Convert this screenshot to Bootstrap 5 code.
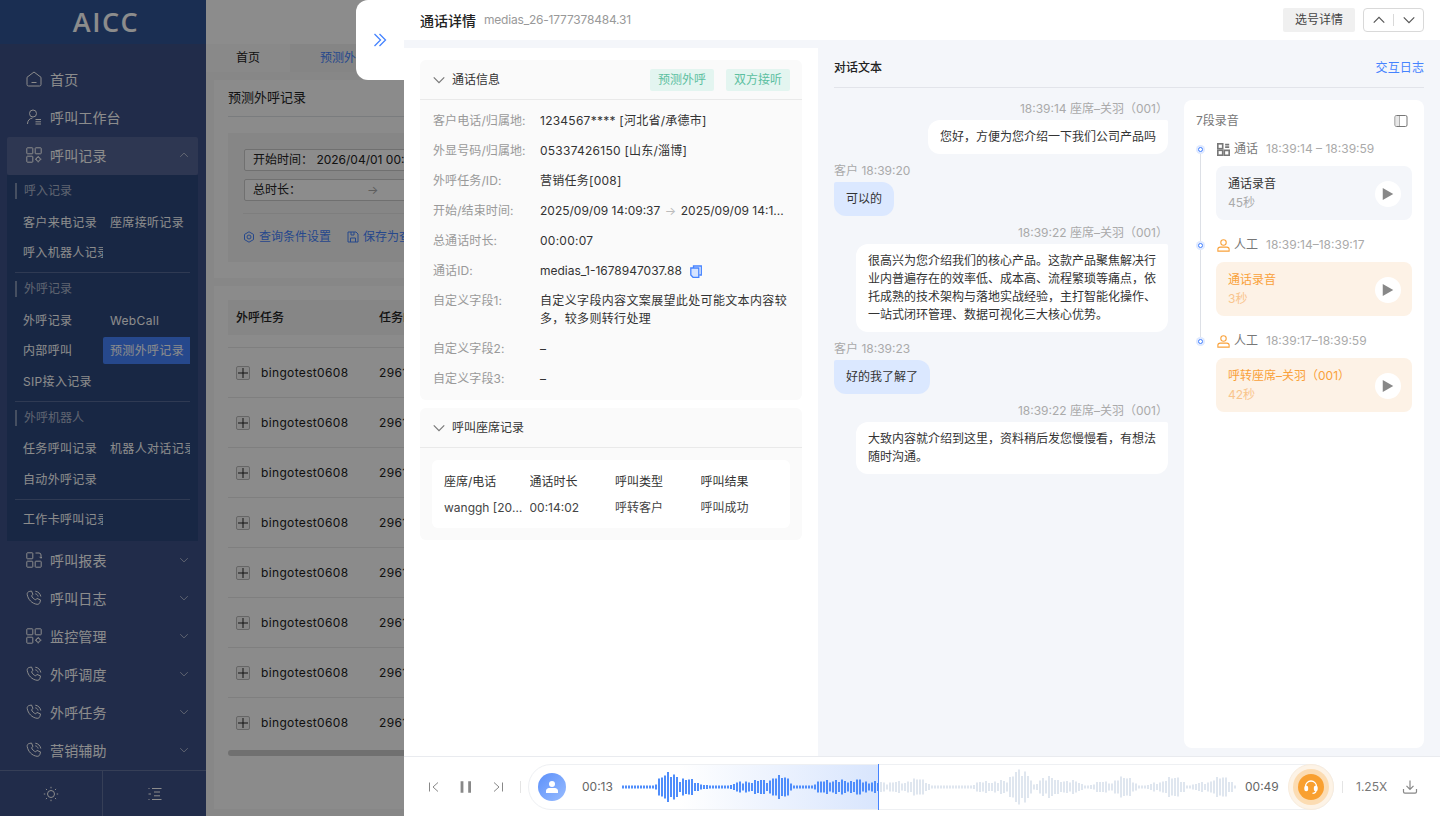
<!DOCTYPE html>
<html lang="zh">

<head>
    <meta charset="utf-8">
    <title>通话详情</title>
    <link href="https://cdn.jsdelivr.net/npm/bootstrap@5.3.2/dist/css/bootstrap.min.css" rel="stylesheet">

    <style>
        body {
            font-family: Inter, "Noto Sans CJK SC", sans-serif;
            font-size: 12px;
            color: #333;
            background: #fff;
        }

        .app { width: 1440px; height: 816px; overflow: hidden; position: relative; }
        .ico { fill: none; stroke: currentColor; stroke-width: 1; flex: none; }

        /* sidebar */
        .side { width: 206px; flex: none; background: #3c5087; color: #fff; }
        .side-logo { height: 44px; background: #315495; font-size: 27px; font-weight: 600; letter-spacing: 1.5px; font-family: "Open Sans", sans-serif; padding-left: 6px; }
        .side-nav { padding: 16px 8px 0 7px; flex: 1; }
        .side-link { height: 38px; padding: 0 9px 0 19px; font-size: 14px; letter-spacing: .15px; border-radius: 2px; }
        .side-link.open { background: #546495; margin-top: 1px; padding-bottom: 2px; }
        .side-link .caret { margin-left: auto; opacity: .7; }
        .sub-box { background: #2c477d; height: 366px; padding: 0 8px; overflow: hidden; }
        .sub-label { height: 16px; margin-top: 8px; padding-left: 7px; border-left: 2px solid rgba(255, 255, 255, .4); line-height: 16px; color: rgba(255, 255, 255, .62); margin-bottom: 9.5px; }
        .sub-grid { display: grid; grid-template-columns: 87px 87px; grid-auto-rows: 30.5px; margin-left: 1px; }
        .sub-item { padding-left: 7px; line-height: 27px; height: 27px; white-space: nowrap; overflow: hidden; letter-spacing: .33px; }
        .sub-item.active { background: #4583ff; border-radius: 2px 0 0 2px; }
        .sub-sep { border-top: 1px solid rgba(255, 255, 255, .2); margin: 2.5px 0 0; }
        .sub-last { margin-top: 6px; }
        .side-foot { height: 46px; border-top: 1px solid rgba(255, 255, 255, .2); }
        .side-foot > div { flex: 1; }
        .side-foot > div:first-child { flex: none; width: 102px; }
        .side-foot > div + div { border-left: 1px solid rgba(255, 255, 255, .2); }

        /* page behind the mask */
        .page-main { background: #f6f6f6; flex: 1; min-width: 0; color: #222; }
        .page-top { height: 44px; background: #fff; }
        .page-tabs { height: 28px; background: #f3f3f3; }
        .page-tab { width: 84px; background: #fafafa; line-height: 28px; text-align: center; }
        .page-tab.on { color: #4583ff; background: #f3f3f3; padding-left: 30px; text-align: left; white-space: nowrap; width: 114px; }
        .page-card { background: #fdfdfd; margin: 8px 0 0 8px; padding: 0 14px; }
        .filter-box { background: #f5f5f5; margin-top: 16px; padding: 16px; height: 129px; }
        .filter-field { height: 22px; width: 400px; border: 1px solid #ccc; border-radius: 2px; background: #fff; padding-left: 8px; margin-bottom: 8px; line-height: 20px; }
        .filter-gap { margin-left: 66px; color: #aaa; }
        .filter-link { color: #4583ff; margin-top: 12px; padding-top: 14px; border-top: 1px solid #e5e5e5; margin-left: -1px; }
        .grid-head { height: 35px; background: #f5f5f5; margin-top: 13px; padding-left: 8px; font-weight: 500; }
        .grid-rows { padding-top: 12px; }
        .grid-row { height: 50px; border-top: 1px solid #e8e8e8; padding-left: 8px; font-size: 12px; letter-spacing: .35px; }
        .grid-plus { width: 14px; height: 14px; border: 1px solid #bbb; background: #f4f4f4; border-radius: 2px; margin-right: 11px; }
        .grid-scroll { height: 6px; background: #ccc; border-radius: 3px; margin-top: 3px; }

        /* mask and drawer */
        .shade { position: absolute; inset: 0; background: rgba(0, 0, 0, .45); z-index: 10; }
        .drawer { position: absolute; top: 0; right: 0; bottom: 0; width: 1036px; background: #f4f6fa; z-index: 11; }
        .drawer-tab { position: absolute; left: -48px; top: 0; width: 48px; height: 80px; background: #fff; border-radius: 12px 0 0 12px; color: #4583ff; }
        .drawer-head { height: 40px; background: #fff; padding: 0 16px; }
        .head-title { font-size: 14px; font-weight: 500; color: #222; }
        .head-id { color: #999; margin-left: 8px; letter-spacing: -.2px; }
        .btn-pick { background: #f0f0f0; border: 0; border-radius: 2px; height: 24px; width: 72px; padding: 0; font-size: 12px; color: #444; }
        .btn-pair { width: 61px; height: 24px; border: 1px solid #d9d9d9; border-radius: 4px; margin-left: 8px; color: #555; }
        .btn-pair i { width: 1px; height: 12px; background: #d9d9d9; }

        .info-col { width: 414px; background: #fff; margin-top: 8px; padding: 12px 16px; flex: none; }
        .info-card { background: #fafafa; border-radius: 6px; margin-bottom: 8px; }
        .info-head { height: 40px; padding: 0 12px; border-bottom: 1px solid #e9e9e9; }
        .info-head .ico { color: #777; margin-right: 6px; }
        .tag-mint { background: #e3f5f0; color: #5cc0a0; height: 22px; width: 64px; line-height: 22px; text-align: center; border-radius: 2px; margin-left: 12px; }
        .info-body { padding: 12px 12px 0 13px; height: 300px; }
        .info-line { margin-bottom: 12px; line-height: 18px; }
        .info-key { width: 107px; flex: none; color: #999; letter-spacing: .1px; }
        .info-val { color: #333; min-width: 0; letter-spacing: .25px; }
        .info-tight { letter-spacing: 0; }
        .info-wide { letter-spacing: .35px; }
        .info-arrow { color: #bbb; margin: 0 4.5px; }
        .seat-box { background: #fff; border-radius: 6px; margin: 12px; height: 68px; padding: 13px 12px 0; }
        .seat-table { table-layout: fixed; width: 342px; margin: 0; --bs-table-bg: transparent; color: #333; }
        .seat-table td { padding: 0; border: 0; height: 26px; line-height: 18px; white-space: nowrap; overflow: hidden; text-overflow: ellipsis; }
        .seat-table thead td { height: 21px; vertical-align: top; }
        .seat-table tbody td { color: #444; padding-top: 5px; }

        .talk-col { flex: 1; padding: 8px 16px 8px 16px; min-width: 0; }
        .talk-head { height: 40px; border-bottom: 1px solid #e2e4ea; margin-bottom: 12px; padding-top: 1px; }
        .talk-title { font-weight: 500; color: #222; }
        .talk-link { color: #4583ff; letter-spacing: .1px; }
        .msg-list { width: 334px; flex: none; margin-top: -1px; }
        .msg { margin-bottom: 7px; }
        .msg-meta { line-height: 18px; color: #aaa; padding-top: 1px; margin-bottom: 2px; }
        .msg-out { text-align: right; }
        .bubble { display: inline-block; padding: 8px 12px; line-height: 18px; border-radius: 12px; text-align: left; color: #333; }
        .msg-out .bubble { background: #fff; border-top-right-radius: 2px; }
        .msg-in .bubble { background: #dbe8ff; border-top-left-radius: 2px; }

        .rec-panel { width: 240px; flex: none; background: #fff; border-radius: 8px; padding: 11px 12px; height: 648px; }
        .rec-top { height: 20px; color: #777; margin-bottom: 9px; line-height: 20px; }
        .rec-steps { position: relative; padding-left: 20px; }
        .rec-steps::before { content: ""; position: absolute; left: 3.5px; top: 10px; height: 192px; width: 1px; background: #dde0e6; }
        .rec-step { margin-bottom: 16px; }
        .rec-line { height: 18px; color: #777; margin-bottom: 8px; position: relative; padding-left: 1px; }
        .rec-line b { font-weight: 400; color: #aaa; margin-left: 8px; white-space: nowrap; }
        .rec-dot { position: absolute; left: -20.5px; top: 4.5px; width: 9px; height: 9px; border-radius: 50%; background: #dfe9ff; }
        .rec-dot::after { content: ""; position: absolute; left: 2px; top: 2px; width: 5px; height: 5px; border-radius: 50%; border: 1.5px solid #4583ff; background: #fff; }
        .rec-card { height: 54px; border-radius: 8px; background: #f4f6fa; padding: 9px 12px 7px; line-height: 18px; }
        .rec-card small { display: block; font-size: 12px; color: #aaa; line-height: 20px; }
        .rec-card.warm { background: #fdf2e6; color: #f9a13a; }
        .rec-card.warm small { color: #f9c58d; }
        .rec-play { width: 26px; height: 26px; border-radius: 50%; background: #fff; flex: none; margin-right: -1px; color: #888; }

        .player { height: 60px; background: #fff; border-top: 1px solid #e9ebef; padding: 0 16px 0 24px; flex: none; }
        .player .ico { color: #888; }
        .player-sep { width: 1px; height: 12px; background: #e4e4e4; flex: none; }
        .pill { width: 806px; height: 46px; border: 1px solid #eef0f3; border-radius: 23px; position: relative; flex: none; margin-left: 7px; }
        .pill-fill { position: absolute; left: 150px; top: 0; bottom: 0; width: 200px; background: linear-gradient(90deg, #fff, #d8e5fd); }
        .pill-mark { position: absolute; left: 349px; top: -1px; bottom: -1px; width: 1px; background: #4583ff; }
        .pill-face { position: absolute; left: 9px; top: 8px; width: 28px; height: 28px; border-radius: 50%; background: linear-gradient(135deg, #5c90fa, #98bcff); color: #fff; }
        .pill-time { position: absolute; top: 13px; line-height: 18px; font-size: 12px; color: #666; }
        .wave { position: absolute; left: 93px; top: 0; bottom: 0; width: 615px; }
        .wave span { position: absolute; top: 50%; width: 2px; transform: translateY(-50%); background: #dfe6ef; }
        .wave span.done { background: #4f8dfb; }
        .ring { position: absolute; left: 759px; top: -1px; width: 46px; height: 46px; border-radius: 50%; background: #fdf3e6; border: 1px solid #f8ecdd; }
        .ring i { position: absolute; left: 4px; top: 4px; width: 36px; height: 36px; border-radius: 50%; background: #fcdcb2; }
        .ring b { position: absolute; left: 9px; top: 9px; width: 26px; height: 26px; border-radius: 50%; background: #f9a030; color: #fff; }
        .speed { color: #777; font-size: 12px; }
    </style>
</head>

<body>
    <svg width="0" height="0" class="position-absolute">
        <defs>
            <symbol id="i-down" viewBox="0 0 12 12"><path d="M1.5 3.8 6 8.300l4.500-4.500" /></symbol>
            <symbol id="i-up" viewBox="0 0 12 12"><path d="M1.5 8.200 6 3.700l4.500 4.500" /></symbol>
            <symbol id="i-home" viewBox="0 0 16 16"><path d="M1 6.300 8 1l7 5.300v7.200a1.500 1.500 0 0 1-1.500 1.500h-11A1.500 1.500 0 0 1 1 13.500ZM5.500 11.500h5" /></symbol>
            <symbol id="i-user" viewBox="0 0 16 16"><circle cx="7" cy="4.500" r="3.500" /><path d="M1.500 15c0-3.500 2-5.500 5-6M9.500 10.500H15M9.500 12.800H15M9.500 15H15" /></symbol>
            <symbol id="i-grid" viewBox="0 0 16 16"><rect x=".8" y=".8" width="6" height="6" rx=".6" /><rect x="9.200" y=".8" width="6" height="6" rx=".6" /><rect x=".8" y="9.200" width="6" height="6" rx=".6" /><circle cx="12.200" cy="12.200" r="2" /><path d="M12.200 9v1.200M12.200 14.200v1.200M9 12.200h1.200M14.200 12.200h1.200" /></symbol>
            <symbol id="i-report" viewBox="0 0 16 16"><rect x=".8" y=".8" width="6" height="6" rx=".6" /><rect x=".8" y="9.200" width="6" height="6" rx=".6" /><rect x="9.200" y="9.200" width="6" height="6" rx=".6" /><path d="M9.500 1H13a2 2 0 0 1 2 2v3M13.500 4.800 15 6.300l1-1.300" /></symbol>
            <symbol id="i-phone" viewBox="0 0 16 16"><path d="M3.200 1.500 5.500 1l1.500 3.500-1.500 1.200c.7 1.800 2.300 3.400 4.200 4.200l1.200-1.500 3.600 1.500-.5 2.300c-.3 1.300-1.500 2.300-2.900 2.100C6 13.700 2 9.500 1.200 4.400 1 3 1.900 1.800 3.200 1.500Z" /><path d="M9.300 1.200c2.800.3 5 2.500 5.500 5.300M9.300 3.800c1.400.2 2.500 1.300 2.800 2.700" /></symbol>
            <symbol id="i-play" viewBox="0 0 12 12"><path d="M1.500 .8v10.400L10.500 6Z" fill="currentColor" stroke="none" /></symbol>
            <symbol id="i-person" viewBox="0 0 12 12"><circle cx="6" cy="3.200" r="2.500" /><path d="M.8 9.500c0-1.200 1-2 2.200-2h6c1.200 0 2.200.8 2.200 2v1.700H.8Z" /></symbol>
        </defs>
    </svg>

    <div class="app d-flex">
        <aside class="side d-flex flex-column">
            <div class="side-logo d-flex align-items-center justify-content-center">AICC</div>
            <div class="side-nav">
                <div class="side-link d-flex align-items-center gap-2"><svg class="ico" width="16" height="16"><use href="#i-home" /></svg>首页</div>
                <div class="side-link d-flex align-items-center gap-2"><svg class="ico" width="16" height="16"><use href="#i-user" /></svg>呼叫工作台</div>
                <div class="side-link open d-flex align-items-center gap-2"><svg class="ico" width="16" height="16"><use href="#i-grid" /></svg>呼叫记录<svg class="ico caret" width="10" height="10"><use href="#i-up" /></svg></div>
                <div class="sub-box">
                    <div class="sub-label">呼入记录</div>
                    <div class="sub-grid">
                        <div class="sub-item">客户来电记录</div>
                        <div class="sub-item">座席接听记录</div>
                        <div class="sub-item">呼入机器人记录</div>
                    </div>
                    <div class="sub-sep"></div>
                    <div class="sub-label">外呼记录</div>
                    <div class="sub-grid">
                        <div class="sub-item">外呼记录</div>
                        <div class="sub-item">WebCall</div>
                        <div class="sub-item">内部呼叫</div>
                        <div class="sub-item active">预测外呼记录</div>
                        <div class="sub-item">SIP接入记录</div>
                    </div>
                    <div class="sub-sep"></div>
                    <div class="sub-label">外呼机器人</div>
                    <div class="sub-grid">
                        <div class="sub-item">任务呼叫记录</div>
                        <div class="sub-item">机器人对话记录</div>
                        <div class="sub-item">自动外呼记录</div>
                    </div>
                    <div class="sub-sep"></div>
                    <div class="sub-grid sub-last">
                        <div class="sub-item">工作卡呼叫记录</div>
                    </div>
                </div>
                <div class="side-link d-flex align-items-center gap-2"><svg class="ico" width="16" height="16"><use href="#i-report" /></svg>呼叫报表<svg class="ico caret" width="10" height="10"><use href="#i-down" /></svg></div>
                <div class="side-link d-flex align-items-center gap-2"><svg class="ico" width="16" height="16"><use href="#i-phone" /></svg>呼叫日志<svg class="ico caret" width="10" height="10"><use href="#i-down" /></svg></div>
                <div class="side-link d-flex align-items-center gap-2"><svg class="ico" width="16" height="16"><use href="#i-grid" /></svg>监控管理<svg class="ico caret" width="10" height="10"><use href="#i-down" /></svg></div>
                <div class="side-link d-flex align-items-center gap-2"><svg class="ico" width="16" height="16"><use href="#i-phone" /></svg>外呼调度<svg class="ico caret" width="10" height="10"><use href="#i-down" /></svg></div>
                <div class="side-link d-flex align-items-center gap-2"><svg class="ico" width="16" height="16"><use href="#i-phone" /></svg>外呼任务<svg class="ico caret" width="10" height="10"><use href="#i-down" /></svg></div>
                <div class="side-link d-flex align-items-center gap-2"><svg class="ico" width="16" height="16"><use href="#i-phone" /></svg>营销辅助<svg class="ico caret" width="10" height="10"><use href="#i-down" /></svg></div>
            </div>
            <div class="side-foot d-flex">
                <div class="d-flex align-items-center justify-content-center">
                    <svg class="ico" width="16" height="16" viewBox="0 0 16 16"><circle cx="8" cy="8" r="3.500" /><path d="M8 .8v1.500M8 13.700v1.500M.8 8h1.500M13.700 8h1.500M2.900 2.900 4 4M12 12l1.100 1.100M2.900 13.100 4 12M12 4l1.100-1.100" /></svg>
                </div>
                <div class="d-flex align-items-center justify-content-center">
                    <svg class="ico" width="16" height="16" viewBox="0 0 16 16"><path d="M5 2.500h9.500M7 6h6M7 9.800h6M5 13.500h9.500M1.500 8h2.500M1.500 2.500h1M1.500 13.500h1" /></svg>
                </div>
            </div>
        </aside>

        <main class="page-main">
            <div class="page-top"></div>
            <div class="page-tabs d-flex">
                <div class="page-tab">首页</div>
                <div class="page-tab on">预测外呼记录</div>
            </div>
            <div class="page-card" style="height:198px">
                <div class="border-bottom d-flex align-items-center" style="height:37px;font-size:13px">预测外呼记录</div>
                <div class="filter-box">
                    <div class="filter-field">开始时间： 2026/04/01 00:00:00</div>
                    <div class="filter-field">总时长：<span class="filter-gap">→</span></div>
                    <div class="filter-link d-flex">
                        <span class="d-flex align-items-center gap-1"><svg class="ico" width="12" height="12" viewBox="0 0 12 12"><circle cx="6" cy="6" r="2" /><path d="M6 .8 10.500 3.400v5.200L6 11.200 1.500 8.600V3.400Z" /></svg>查询条件设置</span>
                        <span class="d-flex align-items-center gap-1 ms-3"><svg class="ico" width="12" height="12" viewBox="0 0 12 12"><path d="M1 1h8l2 2v8H1ZM4 1v3h3V1M3.500 11V7h5v4" /></svg>保存为查询</span>
                    </div>
                </div>
            </div>
            <div class="page-card" style="height:523px;padding-top:1px">
                <div class="grid-head d-flex align-items-center"><span style="width:143px">外呼任务</span><span>任务ID</span></div>
                <div id="gridRows" class="grid-rows"></div>
                <div class="grid-scroll"></div>
            </div>
        </main>

        <div class="shade"></div>

        <section class="drawer d-flex flex-column">
            <div class="drawer-tab d-flex align-items-center justify-content-center">
                <svg class="ico" width="16" height="16" viewBox="0 0 16 16" style="stroke-width:1.300"><path d="M2.500 2 8.500 8l-6 6M7.500 2l6 6-6 6" /></svg>
            </div>

            <div class="drawer-head d-flex align-items-center">
                <span class="head-title">通话详情</span>
                <span class="head-id">medias_26-1777378484.31</span>
                <button type="button" class="btn btn-pick ms-auto">选号详情</button>
                <div class="btn-pair d-flex align-items-center justify-content-evenly">
                    <svg class="ico" width="14" height="14"><use href="#i-up" /></svg><i></i><svg class="ico" width="14" height="14"><use href="#i-down" /></svg>
                </div>
            </div>

            <div class="d-flex flex-grow-1" style="min-height:0">
                <div class="info-col">
                    <div class="info-card">
                        <div class="info-head d-flex align-items-center">
                            <svg class="ico" width="14" height="14"><use href="#i-down" /></svg>
                            <span>通话信息</span>
                            <span class="tag-mint ms-auto">预测外呼</span>
                            <span class="tag-mint">双方接听</span>
                        </div>
                        <div class="info-body">
                            <div class="info-line d-flex"><span class="info-key">客户电话/归属地:</span><span class="info-val">1234567**** [河北省/承德市]</span></div>
                            <div class="info-line d-flex"><span class="info-key">外显号码/归属地:</span><span class="info-val">05337426150 [山东/淄博]</span></div>
                            <div class="info-line d-flex"><span class="info-key">外呼任务/ID:</span><span class="info-val">营销任务[008]</span></div>
                            <div class="info-line d-flex"><span class="info-key">开始/结束时间:</span><span class="info-val info-tight text-nowrap">2025/09/09 14:09:37<span class="info-arrow">→</span>2025/09/09 14:1...</span></div>
                            <div class="info-line d-flex"><span class="info-key">总通话时长:</span><span class="info-val">00:00:07</span></div>
                            <div class="info-line d-flex"><span class="info-key">通话ID:</span><span class="info-val info-tight d-flex align-items-center">medias_1-1678947037.88
                                <svg class="ico ms-2" width="12" height="13" viewBox="0 0 12 13" style="color:#4583ff;stroke-width:1.300"><path d="M3.500 3V1h7.800v9h-2" /><path d="M.8 3h8v9.300H3L.8 10Z" fill="#d6e4ff" /></svg></span></div>
                            <div class="info-line d-flex"><span class="info-key">自定义字段1:</span><span class="info-val info-wide">自定义字段内容文案展望此处可能文本内容较多，较多则转行处理</span></div>
                            <div class="info-line d-flex"><span class="info-key">自定义字段2:</span><span class="info-val">–</span></div>
                            <div class="info-line d-flex"><span class="info-key">自定义字段3:</span><span class="info-val">–</span></div>
                        </div>
                    </div>
                    <div class="info-card" style="height:132px">
                        <div class="info-head d-flex align-items-center">
                            <svg class="ico" width="14" height="14"><use href="#i-down" /></svg>
                            <span>呼叫座席记录</span>
                        </div>
                        <div class="seat-box">
                            <table class="table seat-table">
                                <thead>
                                    <tr><td>座席/电话</td><td>通话时长</td><td>呼叫类型</td><td>呼叫结果</td></tr>
                                </thead>
                                <tbody>
                                    <tr><td class="pe-1">wanggh [2001]</td><td>00:14:02</td><td>呼转客户</td><td>呼叫成功</td></tr>
                                </tbody>
                            </table>
                        </div>
                    </div>
                </div>

                <div class="talk-col d-flex flex-column">
                    <div class="talk-head d-flex align-items-center justify-content-between">
                        <span class="talk-title">对话文本</span>
                        <span class="talk-link">交互日志</span>
                    </div>
                    <div class="d-flex gap-3">
                        <div class="msg-list">
                            <div class="msg msg-out"><div class="msg-meta">18:39:14 座席–关羽（001）</div><div class="bubble" style="width:240px">您好，方便为您介绍一下我们公司产品吗</div></div>
                            <div class="msg msg-in"><div class="msg-meta">客户 18:39:20</div><div class="bubble" style="width:60px">可以的</div></div>
                            <div class="msg msg-out"><div class="msg-meta">18:39:22 座席–关羽（001）</div><div class="bubble" style="width:312px">很高兴为您介绍我们的核心产品。这款产品聚焦解决行业内普遍存在的效率低、成本高、流程繁琐等痛点，依托成熟的技术架构与落地实战经验，主打智能化操作、一站式闭环管理、数据可视化三大核心优势。</div></div>
                            <div class="msg msg-in"><div class="msg-meta">客户 18:39:23</div><div class="bubble" style="width:96px">好的我了解了</div></div>
                            <div class="msg msg-out"><div class="msg-meta">18:39:22 座席–关羽（001）</div><div class="bubble" style="width:312px">大致内容就介绍到这里，资料稍后发您慢慢看，有想法随时沟通。</div></div>
                        </div>
                        <div class="rec-panel">
                            <div class="rec-top d-flex align-items-center justify-content-between">
                                <span>7段录音</span>
                                <svg class="ico me-1" width="14" height="14" viewBox="0 0 14 14"><rect x="1" y="1.500" width="12" height="11" rx="1.500" /><path d="M5.500 1.500v11" /><path d="M1.500 2h4v10h-4Z" fill="#e8e8e8" stroke="none" /></svg>
                            </div>
                            <div class="rec-steps">
                                <div class="rec-step">
                                    <div class="rec-line d-flex align-items-center"><span class="rec-dot"></span>
                                        <svg width="13" height="13" viewBox="0 0 16 16" class="ico me-1" style="stroke-width:2;color:#777"><rect x="1" y="1" width="6" height="6" /><rect x="1" y="9" width="6" height="6" /><path d="M10 2h5M10 5h5M9 9h6v6H9Z" /></svg>
                                        通话<b>18:39:14 – 18:39:59</b></div>
                                    <div class="rec-card d-flex align-items-center justify-content-between">
                                        <div>通话录音<small>45秒</small></div>
                                        <div class="rec-play d-flex align-items-center justify-content-center"><svg width="14" height="14"><use href="#i-play" /></svg></div>
                                    </div>
                                </div>
                                <div class="rec-step">
                                    <div class="rec-line d-flex align-items-center"><span class="rec-dot"></span>
                                        <svg width="13" height="13" class="ico me-1" style="color:#f9a13a"><use href="#i-person" /></svg>
                                        人工<b>18:39:14–18:39:17</b></div>
                                    <div class="rec-card warm d-flex align-items-center justify-content-between">
                                        <div>通话录音<small>3秒</small></div>
                                        <div class="rec-play d-flex align-items-center justify-content-center"><svg width="14" height="14"><use href="#i-play" /></svg></div>
                                    </div>
                                </div>
                                <div class="rec-step">
                                    <div class="rec-line d-flex align-items-center"><span class="rec-dot"></span>
                                        <svg width="13" height="13" class="ico me-1" style="color:#f9a13a"><use href="#i-person" /></svg>
                                        人工<b>18:39:17–18:39:59</b></div>
                                    <div class="rec-card warm d-flex align-items-center justify-content-between">
                                        <div>呼转座席–关羽（001）<small>42秒</small></div>
                                        <div class="rec-play d-flex align-items-center justify-content-center"><svg width="14" height="14"><use href="#i-play" /></svg></div>
                                    </div>
                                </div>
                            </div>
                        </div>
                    </div>
                </div>
            </div>

            <div class="player d-flex align-items-center">
                <svg class="ico" width="12" height="12" viewBox="0 0 12 12"><path d="M1.500 1.500v9M10 1.500 5 6l5 4.500" /></svg>
                <svg class="ico" width="12" height="12" viewBox="0 0 12 12" style="margin-left:20px;stroke-width:2.800"><path d="M2 .2v11.600M9.600 .2v11.600" /></svg>
                <svg class="ico" width="12" height="12" viewBox="0 0 12 12" style="margin-left:20px"><path d="M10.500 1.500v9M2 1.500 7 6l-5 4.500" /></svg>
                <span class="player-sep ms-3"></span>
                <div class="pill">
                    <div class="pill-fill"></div>
                    <div class="wave" id="wave"></div>
                    <div class="pill-mark"></div>
                    <div class="pill-face d-flex align-items-center justify-content-center">
                        <svg width="14" height="14" viewBox="0 0 14 14" fill="currentColor"><circle cx="7" cy="4" r="3" /><path d="M1 13v-2c0-1.600 1.400-3 3-3h6c1.600 0 3 1.400 3 3v2Z" /></svg>
                    </div>
                    <span class="pill-time" style="left:53px">00:13</span>
                    <span class="pill-time" style="left:716px">00:49</span>
                    <div class="ring">
                        <i></i>
                        <b class="d-flex align-items-center justify-content-center">
                            <svg class="ico" width="16" height="16" viewBox="0 0 16 16" style="color:#fff;stroke-width:1.300"><path d="M2.500 10V7.500a5.500 5.500 0 0 1 11 0V10" /><rect x="2" y="7.500" width="2.500" height="4" rx="1" fill="#fff" /><rect x="11.500" y="7.500" width="2.500" height="4" rx="1" fill="#fff" /><path d="M13 11.500c0 1.800-1.500 2.800-3.500 2.800" /></svg>
                        </b>
                    </div>
                </div>
                <span class="player-sep" style="margin-left:8px"></span>
                <span class="speed" style="margin-left:13px">1.25X</span>
                <svg class="ico" width="16" height="16" viewBox="0 0 16 16" style="margin-left:15px;stroke-width:1.200"><path d="M8 1.500V10M4.500 6.800 8 10.300l3.500-3.500M1.500 10v2.800c0 .8.600 1.400 1.400 1.400h10.200c.8 0 1.400-.6 1.400-1.400V10" /></svg>
            </div>
        </section>
    </div>

    <script>
        // rows of the table behind the mask
        let gridHtml = '';
        for (let i = 0; i < 8; i++) {
            gridHtml += `<div class="grid-row d-flex align-items-center"><span class="grid-plus d-flex align-items-center justify-content-center"><svg class="ico" width="10" height="10" viewBox="0 0 10 10"><path d="M0 5h10M5 0v10" /></svg></span><span style="width:118px">bingotest0608</span><span>29617</span></div>`;
        }
        document.getElementById('gridRows').innerHTML = gridHtml;

        // waveform: [x in page px, height] peaks read off the picture
        const peaks = [
            [668, 30], [686, 18], [698, 6], [742, 12], [759, 16], [779, 24], [824, 14], [839, 16], [857, 16], [876, 12],
            [896, 12], [916, 18], [983, 12], [1000, 14], [1019, 36], [1048, 22], [1057, 14], [1070, 14],
            [1102, 12], [1123, 22], [1158, 10], [1172, 22], [1203, 10], [1220, 22]
        ];
        const wave = document.getElementById('wave');
        let bars = '';
        for (let x = 622; x < 1236; x += 3) {
            let h = 3;
            peaks.forEach(p => {
                const d = Math.abs(x - p[0]);
                if (d < 15) {
                    const fall = p[1] * (1 - (d * d) / 225) * (0.6 + 0.4 * Math.abs(Math.cos(x * 1.7)));
                    h = Math.max(h, fall);
                }
            });
            bars += `<span class="${x < 878 ? 'done' : ''}" style="left:${x - 622}px;height:${Math.round(h)}px"></span>`;
        }
        wave.innerHTML = bars;
    </script>
</body>

</html>
